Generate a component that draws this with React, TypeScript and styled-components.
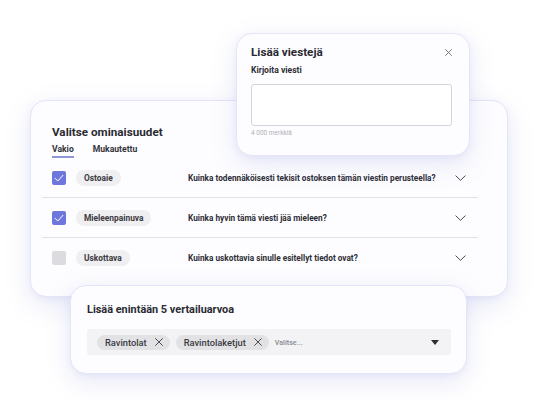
import React from "react";
import styled, { createGlobalStyle } from "styled-components";

const Global = createGlobalStyle`
  html, body { margin: 0; padding: 0; background: #ffffff; }
  body { font-family: Roboto, Inter, "Noto Sans", "Liberation Sans", sans-serif; color: #2b2b33; }
  * { box-sizing: border-box; }
`;

const Canvas = styled.div`
  position: relative;
  width: 534px;
  height: 400px;
  overflow: hidden;
  background: #ffffff;
`;

const Card = styled.div<{ $x: number; $y: number; $w: number; $h: number; $z: number }>`
  position: absolute;
  left: ${(p) => p.$x}px;
  top: ${(p) => p.$y}px;
  width: ${(p) => p.$w}px;
  height: ${(p) => p.$h}px;
  z-index: ${(p) => p.$z};
  background: #fdfdff;
  border: 1px solid #e3e5fa;
  border-radius: 16px;
  box-shadow: 0 8px 26px rgba(120, 126, 210, 0.18), 0 2px 6px rgba(120, 126, 210, 0.08);
`;

const Title = styled.h2<{ $size?: number }>`
  margin: 0;
  font-size: ${(p) => p.$size ?? 11.7}px;
  line-height: 16px;
  font-weight: 700;
  color: #2a2a32;
`;

/* ---------- message dialog ---------- */
const Dialog = styled.div`
  display: flex;
  flex-direction: column;
  padding: 10px 17px 0 14px;
`;

const DialogHead = styled.div`
  display: flex;
  align-items: center;
  justify-content: space-between;
  height: 16px;
`;

const Label = styled.div`
  margin-top: 5px;
  font-size: 8.6px;
  line-height: 11px;
  font-weight: 700;
  color: #2e2e36;
`;

const TextBox = styled.div`
  margin-top: 8px;
  height: 42px;
  border: 1px solid #d4d4da;
  border-radius: 3px;
  background: #ffffff;
`;

const Hint = styled.div`
  margin-top: 3px;
  font-size: 6.5px;
  color: #b0b0b6;
`;

/* ---------- property list ---------- */
const Panel = styled.div`
  display: flex;
  flex-direction: column;
  padding: 23px 29px 0 11px;
`;

const PanelTitle = styled(Title)`
  margin-left: 10px;
`;

const Tabs = styled.div`
  display: flex;
  gap: 19px;
  margin-top: 4px;
  padding-left: 10px;
`;

const Tab = styled.div<{ $active?: boolean }>`
  font-size: 8.6px;
  line-height: 11px;
  font-weight: 700;
  color: #33333b;
  padding-bottom: 1px;
  border-bottom: 2px solid ${(p) => (p.$active ? "#8f95d6" : "transparent")};
`;

const Row = styled.div<{ $last?: boolean }>`
  display: flex;
  align-items: center;
  height: 40px;
  padding-left: 10px;
  border-bottom: 1px solid ${(p) => (p.$last ? "transparent" : "#e2e2e6")};
`;

const Check = styled.span<{ $on?: boolean }>`
  display: flex;
  align-items: center;
  justify-content: center;
  width: 14px;
  height: 14px;
  border-radius: 2px;
  background: ${(p) => (p.$on ? "#6e77dc" : "#dcdce0")};
  flex: none;
`;

const PillCol = styled.div`
  width: 122px;
  flex: none;
  display: flex;
`;

const Pill = styled.span`
  display: inline-flex;
  align-items: center;
  height: 16px;
  margin-left: 10px;
  padding: 0 8px;
  border-radius: 8px;
  background: #efeff1;
  font-size: 8.4px;
  font-weight: 700;
  color: #3a3a42;
`;

const Question = styled.span`
  flex: 1;
  font-size: 8.25px;
  font-weight: 700;
  color: #2e2e36;
`;

const Chevron = styled.svg`
  flex: none;
  margin-right: 12px;
`;

/* ---------- benchmark picker ---------- */
const Picker = styled.div`
  display: flex;
  flex-direction: column;
  padding: 16px 15px 0 16px;
`;

const Select = styled.div`
  display: flex;
  align-items: center;
  margin-top: 11px;
  height: 26px;
  padding: 0 12px 0 10px;
  border-radius: 3px;
  background: #f3f3f5;
`;

const Chip = styled.span`
  display: inline-flex;
  align-items: center;
  gap: 8px;
  height: 15px;
  margin-right: 6px;
  padding: 0 7px 0 8px;
  border-radius: 8px;
  background: #e2e2e5;
  font-size: 9.3px;
  font-weight: 500;
  color: #3a3a42;
`;

const Placeholder = styled.span`
  flex: 1;
  font-size: 7.2px;
  font-weight: 500;
  color: #8a8a92;
`;

const Caret = styled.span`
  width: 0;
  height: 0;
  border-left: 4.5px solid transparent;
  border-right: 4.5px solid transparent;
  border-top: 5.5px solid #2e2e36;
`;

const Tick = () => (
  <svg width="10" height="8" viewBox="0 0 10 8">
    <path d="M1 4.2 L3.8 7 L9 1.2" fill="none" stroke="#fff" strokeWidth="1" strokeLinecap="round" strokeLinejoin="round" />
  </svg>
);

const Cross = ({ size, color }: { size: number; color: string }) => (
  <svg width={size} height={size} viewBox="0 0 8 8">
    <path d="M0.6 0.6 L7.4 7.4 M7.4 0.6 L0.6 7.4" stroke={color} strokeWidth="0.9" strokeLinecap="round" />
  </svg>
);

const rows = [
  { on: true, name: "Ostoaie", q: "Kuinka todennäköisesti tekisit ostoksen tämän viestin perusteella?" },
  { on: true, name: "Mieleenpainuva", q: "Kuinka hyvin tämä viesti jää mieleen?" },
  { on: false, name: "Uskottava", q: "Kuinka uskottavia sinulle esitellyt tiedot ovat?" },
];

export default function App() {
  return (
    <Canvas>
      <Global />
      <Card $x={30} $y={100} $w={478} $h={197} $z={1}>
        <Panel>
          <PanelTitle>Valitse ominaisuudet</PanelTitle>
          <Tabs>
            <Tab $active>Vakio</Tab>
            <Tab>Mukautettu</Tab>
          </Tabs>
          <div>
            {rows.map((r, i) => (
              <Row key={r.name} $last={i === rows.length - 1}>
                <Check $on={r.on}>{r.on && <Tick />}</Check>
                <PillCol>
                  <Pill>{r.name}</Pill>
                </PillCol>
                <Question>{r.q}</Question>
                <Chevron width="11" height="6" viewBox="0 0 11 6">
                  <path d="M0.6 0.6 L5.5 5.3 L10.4 0.6" fill="none" stroke="#4a4a52" strokeWidth="1" />
                </Chevron>
              </Row>
            ))}
          </div>
        </Panel>
      </Card>

      <Card $x={236} $y={33} $w={234} $h={123} $z={2}>
        <Dialog>
          <DialogHead>
            <Title>Lisää viestejä</Title>
            <Cross size={7} color="#5a5a64" />
          </DialogHead>
          <Label>Kirjoita viesti</Label>
          <TextBox />
          <Hint>4 000 merkkiä</Hint>
        </Dialog>
      </Card>

      <Card $x={70} $y={285} $w={397} $h={89} $z={3}>
        <Picker>
          <Title $size={10.9}>Lisää enintään 5 vertailuarvoa</Title>
          <Select>
            <Chip>
              Ravintolat <Cross size={8} color="#3a3a42" />
            </Chip>
            <Chip>
              Ravintolaketjut <Cross size={8} color="#3a3a42" />
            </Chip>
            <Placeholder>Valitse...</Placeholder>
            <Caret />
          </Select>
        </Picker>
      </Card>
    </Canvas>
  );
}
